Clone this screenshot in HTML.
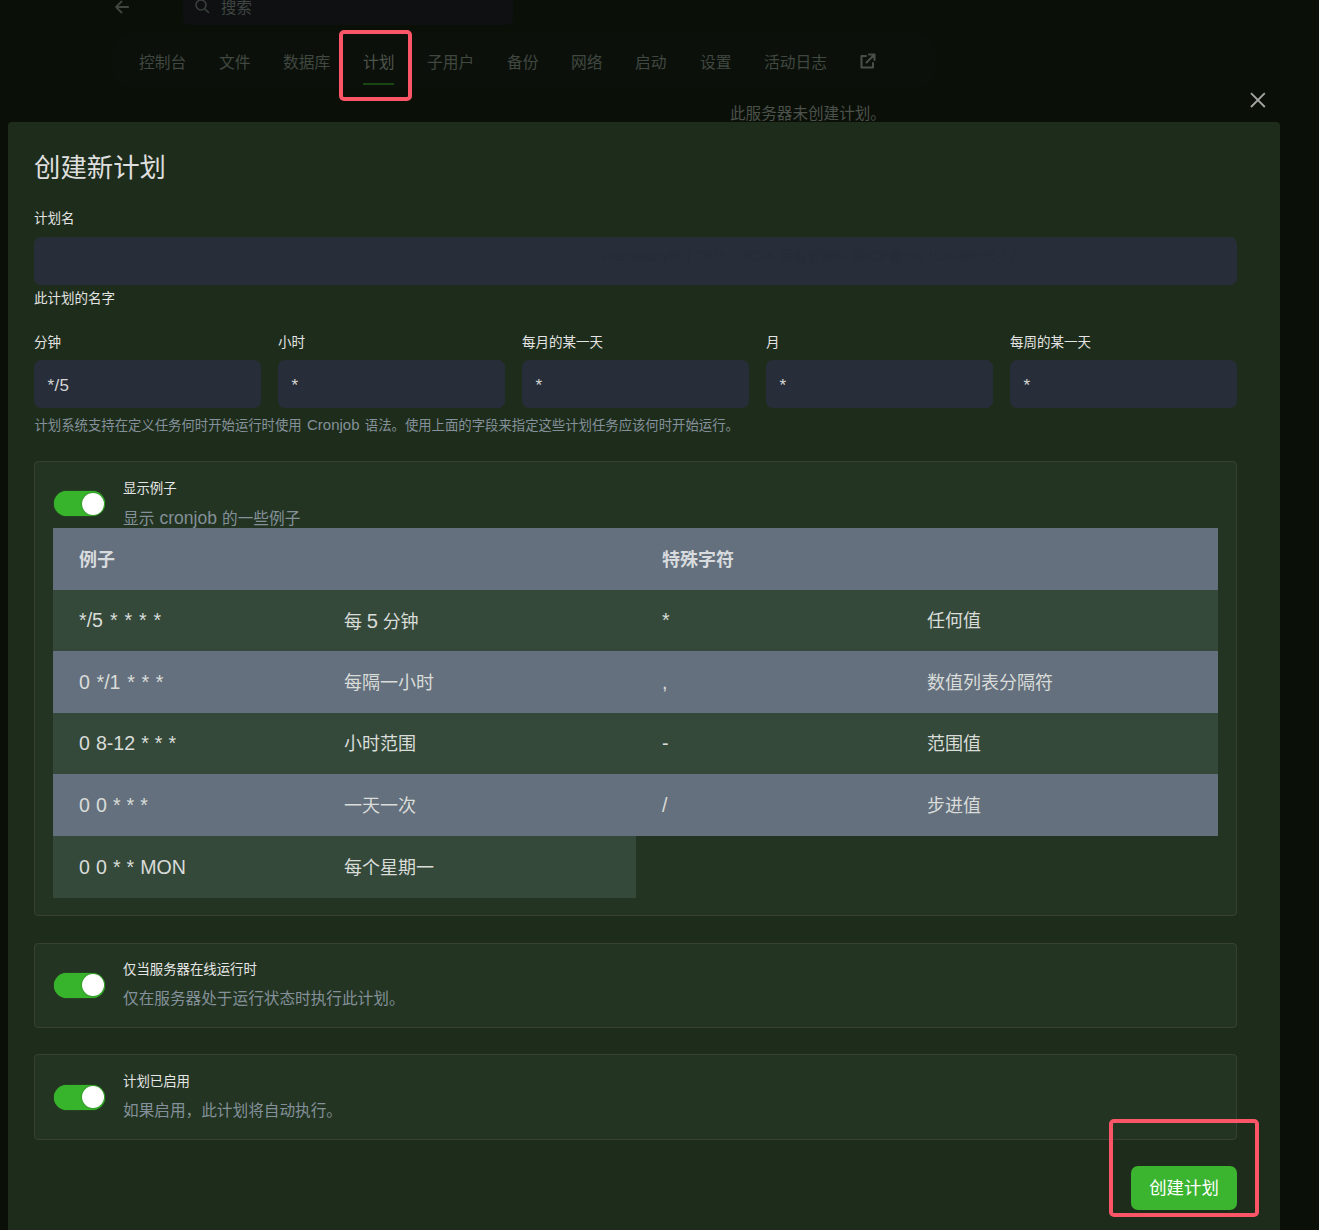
<!DOCTYPE html>
<html lang="zh-CN">
<head>
<meta charset="utf-8">
<title>创建新计划</title>
<style>
*{box-sizing:border-box;margin:0;padding:0}
html,body{width:1319px;height:1230px;overflow:hidden;background:#0a0f08}
body{position:relative;font-family:"Liberation Sans","Noto Sans CJK SC",sans-serif;color:#dcdcdc;-webkit-font-smoothing:antialiased}
.abs{position:absolute;white-space:nowrap}
/* top bar */
.search{left:183.300px;top:-10px;width:329.500px;height:34.700px;background:#0e1012;border-radius:6px}
.search-t{left:221px;top:-2.500px;font-size:15.400px;line-height:20px;color:#3f4540}
.navwrap{left:112px;top:33px;width:824px;height:55px;border-radius:18px;background:#0b110a}
.tab{top:52.500px;font-size:15.750px;line-height:20px;color:#414741}
.tab.on{color:#4e544e}
.uline{left:363px;top:83px;width:31px;height:2px;background:#194511}
.notice{left:730px;top:104px;font-size:15.6px;line-height:20px;color:#4b514b}
/* modal */
.modal{left:8px;top:122px;width:1272px;height:1120px;background:#1e2d1b;border-radius:4px}
h2{left:34px;top:150px;font-size:26.4px;line-height:36px;font-weight:400;color:#dedede}
.lbl{font-size:13.5px;line-height:18px;color:#e4e4e4}
.inp{height:48px;background:#282e39;border-radius:7px;font-size:17px;line-height:52px;padding-left:13.5px;letter-spacing:.3px;color:#d6d6d6}
.help{left:34.5px;top:416px;font-size:13.37px;line-height:18px;color:#84909a}
.box{left:34px;width:1203px;background:#233522;border:1px solid #384036;border-radius:4px}
.tog{left:53.75px;width:51.5px;height:25px;border-radius:12.5px;background:#38b42c;box-shadow:0 0 1px #38b42c}
.tog i{position:absolute;right:1px;top:1.5px;width:22px;height:22px;border-radius:50%;background:#fff;box-shadow:0 0 2px rgba(0,0,0,.4)}
.bt{left:123px;font-size:13.4px;line-height:18px;color:#e6e6e6}
.bd{left:123px;font-size:15.65px;line-height:20px;color:#84909a}
/* tables */
.row{left:53px;height:62px}
.hd{background:#64707d}
.dk{background:#34493a}
.th{font-size:18px;font-weight:700;line-height:24px;color:#d8dbde}
.td{font-size:18px;line-height:24px;color:#d9dcd9}
.l{font-size:1.12em;word-spacing:.08em}
.tl{font-size:19.6px;word-spacing:.6px}
.btn{left:1131px;top:1166px;width:106px;height:44px;border-radius:7px;background:#3bb530;color:#fff;font-size:17.4px;line-height:45px;text-align:center}
.mark{border:4.5px solid #fb5568;border-radius:5px}
</style>
</head>
<body>
<!-- top bar -->
<svg class="abs" style="left:113px;top:-2px" width="18" height="18" viewBox="0 0 18 18" fill="none" stroke="#3f453f" stroke-width="1.8" stroke-linecap="round" stroke-linejoin="round"><path d="M15.200 9H3M8.500 3.500L3 9l5.500 5.500"/></svg>
<div class="abs search"></div>
<svg class="abs" style="left:194px;top:-2px" width="16" height="16" viewBox="0 0 16 16" fill="none" stroke="#3a403b" stroke-width="1.6" stroke-linecap="round"><circle cx="7" cy="7" r="5"/><path d="M11 11l3.500 3.500"/></svg>
<div class="abs search-t">搜索</div>

<div class="abs navwrap"></div>
<div class="abs tab" style="left:139px">控制台</div>
<div class="abs tab" style="left:219px">文件</div>
<div class="abs tab" style="left:283px">数据库</div>
<div class="abs tab on" style="left:363px">计划</div>
<div class="abs tab" style="left:427px">子用户</div>
<div class="abs tab" style="left:507px">备份</div>
<div class="abs tab" style="left:571px">网络</div>
<div class="abs tab" style="left:635px">启动</div>
<div class="abs tab" style="left:700px">设置</div>
<div class="abs tab" style="left:764px">活动日志</div>
<svg class="abs" style="left:859px;top:52.500px" width="17" height="17" viewBox="0 0 17 17" fill="none" stroke="#484e48" stroke-width="2.1" stroke-linecap="round" stroke-linejoin="round"><path d="M7 3H2.500v11.500H14V10M10 1.500h5.500V7M15 2L7.500 9.500"/></svg>
<div class="abs uline"></div>
<div class="abs mark" style="left:339px;top:30px;width:72.8px;height:70.5px"></div>
<div class="abs notice">此服务器未创建计划。</div>
<svg class="abs" style="left:1249px;top:91px" width="18" height="18" viewBox="0 0 18 18" fill="none" stroke="#a3a5a3" stroke-width="1.9" stroke-linecap="butt"><path d="M2 2.200l13.800 13.800M15.800 2.200L2 16"/></svg>

<!-- modal -->
<div class="abs modal"></div>
<h2 class="abs">创建新计划</h2>
<div class="abs lbl" style="left:34px;top:210px">计划名</div>
<div class="abs inp" style="left:34px;top:237px;width:1203px"></div>
<div class="abs" style="left:601px;top:246px;font-size:14.2px;word-spacing:1px;line-height:20px;color:#262c36">Pterodactyl® | 2015 - 2024 面板管理© 浙ICP备2021032485号-17</div>
<div class="abs lbl" style="left:34px;top:290px">此计划的名字</div>

<div class="abs lbl" style="left:34px;top:334px">分钟</div>
<div class="abs lbl" style="left:278px;top:334px">小时</div>
<div class="abs lbl" style="left:522px;top:334px">每月的某一天</div>
<div class="abs lbl" style="left:766px;top:334px">月</div>
<div class="abs lbl" style="left:1010px;top:334px">每周的某一天</div>
<div class="abs inp" style="left:34px;top:360px;width:227px">*/5</div>
<div class="abs inp" style="left:278px;top:360px;width:227px">*</div>
<div class="abs inp" style="left:522px;top:360px;width:227px">*</div>
<div class="abs inp" style="left:766px;top:360px;width:227px">*</div>
<div class="abs inp" style="left:1010px;top:360px;width:227px">*</div>
<div class="abs help">计划系统支持在定义任务何时开始运行时使用<span class="l"> Cronjob </span>语法。使用上面的字段来指定这些计划任务应该何时开始运行。</div>

<!-- box 1 -->
<div class="abs box" style="top:461px;height:455px"></div>
<div class="abs tog" style="top:491.4px"><i></i></div>
<div class="abs bt" style="top:479.500px">显示例子</div>
<div class="abs bd" style="top:507.5px">显示<span class="l" style="word-spacing:.3px"> cronjob </span>的一些例子</div>

<div class="abs row hd" style="top:528px;width:1165px;height:62px"></div>
<div class="abs row dk" style="top:590px;width:1165px;height:61px"></div>
<div class="abs row hd" style="top:651px;width:1165px"></div>
<div class="abs row dk" style="top:713px;width:1165px;height:61px"></div>
<div class="abs row hd" style="top:774px;width:1165px"></div>
<div class="abs row dk" style="top:836px;width:583px"></div>

<div class="abs th" style="left:79px;top:548px">例子</div>
<div class="abs th" style="left:662px;top:548px">特殊字符</div>

<div class="abs td tl" style="left:79px;top:608px;word-spacing:1.5px">*/5 * * * *</div>
<div class="abs td" style="left:344px;top:609px">每<span class="l" style="word-spacing:-0.9px"> 5 </span>分钟</div>
<div class="abs td tl" style="left:662px;top:608px">*</div>
<div class="abs td" style="left:927px;top:609px">任何值</div>

<div class="abs td tl" style="left:79px;top:670px;word-spacing:1.2px">0 */1 * * *</div>
<div class="abs td" style="left:344px;top:671px">每隔一小时</div>
<div class="abs td tl" style="left:662px;top:670px">,</div>
<div class="abs td" style="left:927px;top:671px">数值列表分隔符</div>

<div class="abs td tl" style="left:79px;top:731px">0 8-12 * * *</div>
<div class="abs td" style="left:344px;top:732px">小时范围</div>
<div class="abs td tl" style="left:662px;top:731px">-</div>
<div class="abs td" style="left:927px;top:732px">范围值</div>

<div class="abs td tl" style="left:79px;top:793px">0 0 * * *</div>
<div class="abs td" style="left:344px;top:794px">一天一次</div>
<div class="abs td tl" style="left:662px;top:793px">/</div>
<div class="abs td" style="left:927px;top:794px">步进值</div>

<div class="abs td tl" style="left:79px;top:855px">0 0 * * MON</div>
<div class="abs td" style="left:344px;top:856px">每个星期一</div>

<!-- box 2 -->
<div class="abs box" style="top:943px;height:85px"></div>
<div class="abs tog" style="top:972.500px"><i></i></div>
<div class="abs bt" style="top:961px">仅当服务器在线运行时</div>
<div class="abs bd" style="top:989px">仅在服务器处于运行状态时执行此计划。</div>

<!-- box 3 -->
<div class="abs box" style="top:1054px;height:86px"></div>
<div class="abs tog" style="top:1084.500px"><i></i></div>
<div class="abs bt" style="top:1073px">计划已启用</div>
<div class="abs bd" style="top:1101px">如果启用，此计划将自动执行。</div>

<div class="abs btn">创建计划</div>
<div class="abs mark" style="left:1109px;top:1118.8px;width:149.5px;height:98px"></div>
</body>
</html>
